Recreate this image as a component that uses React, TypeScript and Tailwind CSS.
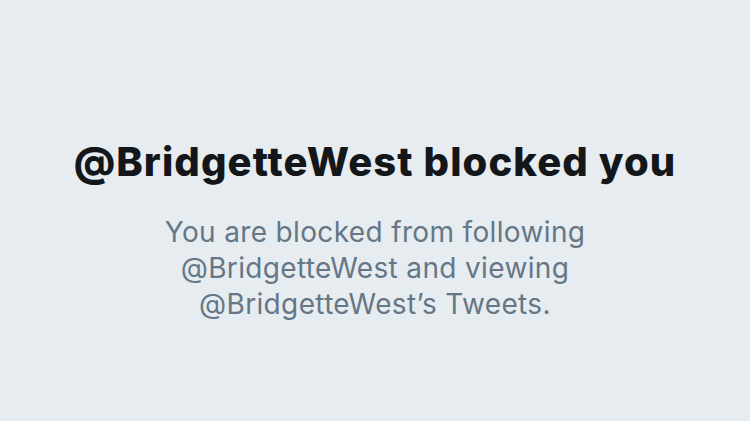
export default function App() {
  return (
    <div
      className="w-[750px] h-[421px] bg-[#e6ecf0] flex flex-col items-center pt-[140px]"
      style={{ fontFamily: "Inter, 'Noto Sans', sans-serif" }}
    >
      <h1 className="text-[40px] leading-[44px] font-extrabold text-[#14171a] tracking-[1.1px]">
        @BridgetteWest blocked you
      </h1>
      <p className="mt-[30px] w-[460px] text-center text-[28px] leading-[36px] tracking-[0.35px] text-[#657786]">
        You are blocked from following @BridgetteWest and viewing
        @BridgetteWest’s Tweets.
      </p>
    </div>
  )
}
